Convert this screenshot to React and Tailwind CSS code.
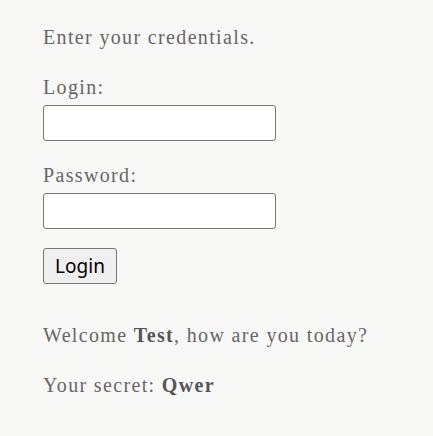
export default function App() {
  return (
    <div className="min-h-[436px] w-full bg-[#f8f8f7] pl-[43px] pt-[26px] text-[#666] text-[20px] leading-[23px] tracking-[1.35px]" style={{ fontFamily: '"Liberation Serif", "Times New Roman", serif' }}>
      <p>Enter your credentials.</p>
      <p className="mt-[27px]">Login:</p>
      <input type="text" className="mt-[6px] block w-[233px] h-[36px] bg-white border border-[#767676] rounded-[3px]" />
      <p className="mt-[23px]">Password:</p>
      <input type="password" className="mt-[6px] block w-[233px] h-[36px] bg-white border border-[#767676] rounded-[3px]" />
      <button className="mt-[19px] block w-[74px] h-[36px] bg-[#efefef] border border-[#767676] rounded-[3px] text-black text-[19px] tracking-normal" style={{ fontFamily: '"Noto Sans", "Open Sans", sans-serif' }}>Login</button>
      <p className="mt-[40px]">Welcome <b className="text-[#555]">Test</b>, how are you today?</p>
      <p className="mt-[27px]">Your secret: <b className="text-[#555]">Qwer</b></p>
    </div>
  );
}
